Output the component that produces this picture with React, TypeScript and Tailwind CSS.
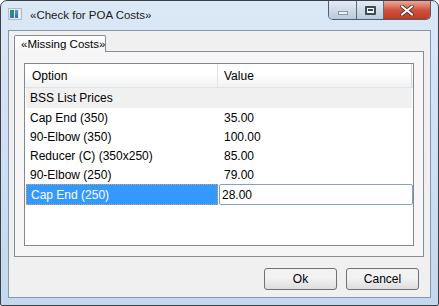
import React from "react";

const rows = [
  { o: "Cap End (350)", v: "35.00" },
  { o: "90-Elbow (350)", v: "100.00" },
  { o: "Reducer (C) (350x250)", v: "85.00" },
  { o: "90-Elbow (250)", v: "79.00" },
];

export default function App() {
  return (
    <div
      className="w-[439px] h-[306px] overflow-hidden text-[12px] text-black"
      style={{ fontFamily: '"Liberation Sans", Arial, sans-serif' }}
    >
      <div className="w-[439px] h-[306px] flex flex-col border border-[#3c4148] rounded-t-[7px] rounded-b-[2px] bg-gradient-to-b from-[#dbe8f6] via-[#cfe0f2] to-[#c3d8ee] px-[7px] pb-[7px]">
        {/* title bar */}
        <div className="h-[29px] flex items-start shrink-0">
          <div className="mt-[7px] w-[14px] h-[12px] bg-[#e4e7ea] border border-[#b3bcc5] flex items-stretch gap-[1px] p-[1px]">
            <div className="w-[4px] bg-gradient-to-b from-[#2f8f6f] to-[#3e76b8]" />
            <div className="w-[3px] bg-gradient-to-b from-[#4b9fd6] to-[#2e6fb0]" />
            <div className="flex-1 bg-[#f5f6f7]" />
          </div>
          <div className="ml-[8px] mt-[7px] text-[11.5px] leading-[15px] text-[#1a1a1a] whitespace-nowrap">
            «Check for POA Costs»
          </div>
          <div className="ml-auto flex h-[19px] border border-t-0 border-[#4f5e70] rounded-b-[5px] overflow-hidden">
            <div className="w-[28px] h-full bg-gradient-to-b from-[#e3ebf4] via-[#cfdbe8] to-[#b9c9da] flex items-center justify-center border-r border-[#5c6b7c]">
              <div className="w-[10px] h-[4px] mt-[5px] bg-[#eef3f8] border border-[#8797a9]" />
            </div>
            <div className="w-[27px] h-full bg-gradient-to-b from-[#e3ebf4] via-[#cfdbe8] to-[#b9c9da] flex items-center justify-center border-r border-[#5c6b7c]">
              <div className="w-[11px] h-[9px] border-[2px] border-[#3d4a5a] bg-white rounded-[1px] flex items-center justify-center">
                <div className="w-[5px] h-[2px] bg-[#3d4a5a]" />
              </div>
            </div>
            <div className="w-[46px] h-full bg-gradient-to-b from-[#e9a99c] via-[#d0533e] to-[#c0391f] flex items-center justify-center">
              <svg width="14" height="11" viewBox="0 0 14 11">
                <path d="M2 1.5 L12 9.5 M12 1.5 L2 9.5" stroke="#5a2a22" strokeWidth="3.6" strokeLinecap="round" />
                <path d="M2 1.5 L12 9.5 M12 1.5 L2 9.5" stroke="#ffffff" strokeWidth="2.2" strokeLinecap="round" />
              </svg>
            </div>
          </div>
        </div>

        {/* client */}
        <div className="flex-1 bg-[#f0f0f0] border border-[#8497ad] flex flex-col pl-[5px] pr-[6px] pt-[4px]">
          {/* tab header */}
          <div className="flex">
            <div className="h-[17px] w-[92px] whitespace-nowrap text-[11.5px] border border-b-0 border-[#898c95] bg-gradient-to-b from-white to-[#f6f6f6] rounded-t-[2px] pl-[6px] pt-[1px] leading-[15px] relative z-10 -mb-[1px]">
              «Missing Costs»
            </div>
          </div>
          {/* tab panel */}
          <div className="w-[410px] h-[206px] border border-[#898c95] bg-[#f6f6f6] px-[9px] pt-[11px]">
            <div className="w-[390px] h-[183px] border border-[#828790] bg-white flex flex-col">
              {/* header */}
              <div className="h-[24px] flex bg-gradient-to-b from-white from-40% to-[#f1f2f4] border-b border-[#e2e3e5]">
                <div className="w-[193px] pl-[7px] flex items-center border-r border-[#e3e4e6]">Option</div>
                <div className="w-[194px] pl-[6px] flex items-center border-r border-[#d5d5d5]">Value</div>
              </div>
              {/* group row */}
              <div className="h-[20px] mx-[1px] w-[386px] bg-[#f0f0f0] flex items-center pl-[4px]">BSS List Prices</div>
              {rows.map((r) => (
                <div key={r.o} className="h-[19px] flex items-center">
                  <div className="w-[193px] pl-[5px]">{r.o}</div>
                  <div className="pl-[6px]">{r.v}</div>
                </div>
              ))}
              <div className="h-[21px] flex items-stretch">
                <div className="ml-[1px] w-[192px] bg-[#3399ff] text-white pl-[4px] flex items-center border border-dotted border-[#e3a05c]">
                  Cap End (250)
                </div>
                <div className="w-[194px] ml-[1px] border border-[#7da2ce] rounded-[2px] flex items-center pl-[2px]">
                  28.00
                </div>
              </div>
            </div>
          </div>
          {/* buttons */}
          <div className="flex justify-end gap-[9px] mt-[11px] pr-[5px]">
            <div className="w-[73px] h-[22px] border border-[#707070] rounded-[3px] bg-gradient-to-b from-[#f2f2f2] from-45% to-[#dddddd] flex items-center justify-center">
              Ok
            </div>
            <div className="w-[73px] h-[22px] border border-[#707070] rounded-[3px] bg-gradient-to-b from-[#f2f2f2] from-45% to-[#dddddd] flex items-center justify-center">
              Cancel
            </div>
          </div>
        </div>
      </div>
    </div>
  );
}
